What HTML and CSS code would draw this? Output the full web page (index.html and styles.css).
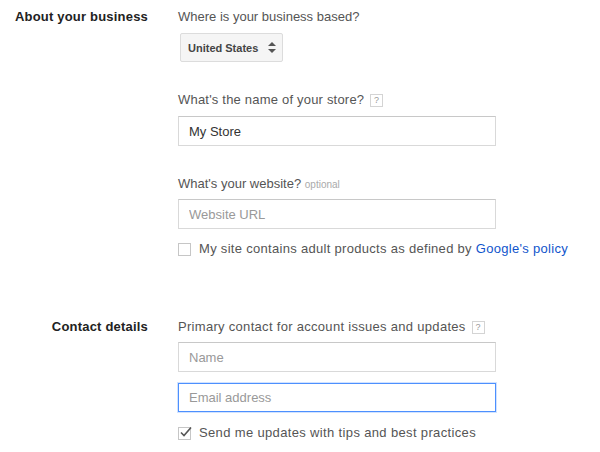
FILE: index.html
```html
<!DOCTYPE html>
<html>
<head>
    <meta charset="UTF-8">
    <title>Business information</title>
    <link rel="stylesheet" href="styles.css">
</head>
<body>
    <div class="section about">
        <div class="section-label">About your business</div>
        <div class="fields">
            <div class="question">Where is your business based?</div>
            <div class="select-btn">
                <span>United States</span>
                <svg width="8" height="11" viewBox="0 0 8 11"><path d="M4 0 L8 4 L0 4 Z M0 7 L8 7 L4 11 Z" fill="#555"/></svg>
            </div>

            <div class="question q-store">What's the name of your store? <span class="help">?</span></div>
            <input class="text-input" type="text" value="My Store">

            <div class="question q-site">What's your website? <span class="optional">optional</span></div>
            <input class="text-input input-site" type="text" placeholder="Website URL">

            <label class="check-row check-adult">
                <span class="checkbox"></span>
                <span>My site contains adult products as defined by <a href="#">Google's policy</a></span>
            </label>
        </div>
    </div>

    <div class="section contact">
        <div class="section-label">Contact details</div>
        <div class="fields">
            <div class="question wide">Primary contact for account issues and updates <span class="help">?</span></div>
            <input class="text-input input-name" type="text" placeholder="Name">
            <input class="text-input focused" type="text" placeholder="Email address">
            <label class="check-row check-updates">
                <span class="checkbox">
                    <svg width="13" height="13" viewBox="0 0 13 13"><path d="M2 6.5 L5 9.5 L12 1.5" fill="none" stroke="#555" stroke-width="1.6"/></svg>
                </span>
                <span>Send me updates with tips and best practices</span>
            </label>
        </div>
    </div>
</body>
</html>
```

FILE: styles.css
```css
body {
    margin: 0;
    background: #fff;
    font-family: "Liberation Sans", Arial, sans-serif;
    font-size: 13px;
    color: #555;
}

.section {
    display: grid;
    grid-template-columns: 148px 1fr;
    column-gap: 30px;
}

.about {
    padding-top: 8px;
}

.contact {
    margin-top: 60px;
}

.section-label {
    text-align: right;
    font-weight: bold;
    color: #222;
    line-height: 18px;
    letter-spacing: 0.2px;
}

.fields {
    display: flex;
    flex-direction: column;
    align-items: flex-start;
}

.question {
    line-height: 18px;
    color: #555;
    white-space: nowrap;
}

.question.wide {
    letter-spacing: 0.3px;
}

.q-store {
    margin-top: 29px;
    letter-spacing: 0.2px;
}

.q-site {
    margin-top: 29px;
}

.help {
    display: inline-block;
    width: 11px;
    height: 11px;
    border: 1px solid #d4d4d4;
    font-size: 9px;
    line-height: 11px;
    text-align: center;
    color: #999;
    vertical-align: 1px;
    margin-left: 2px;
    letter-spacing: 0;
}

.optional {
    font-size: 10px;
    color: #aaa;
    letter-spacing: 0;
}

.select-btn {
    margin-top: 7px;
    margin-left: 2px;
    box-sizing: border-box;
    width: 103px;
    height: 29px;
    padding: 0 6px 0 7px;
    display: flex;
    align-items: center;
    justify-content: space-between;
    background: #f5f5f5;
    border: 1px solid #dcdcdc;
    border-radius: 2px;
    font-size: 11px;
    font-weight: bold;
    color: #444;
}

.text-input {
    box-sizing: border-box;
    width: 318px;
    height: 30px;
    margin: 7px 0 0;
    padding: 0 10px;
    border: 1px solid #d9d9d9;
    border-top-color: #c8c8c8;
    font-family: inherit;
    font-size: 13px;
    color: #333;
    outline: none;
}

.input-site {
    margin-top: 5px;
}

.input-name {
    margin-top: 6px;
}

.text-input::placeholder {
    color: #999;
}

.text-input.focused {
    margin-top: 11px;
    height: 29px;
    border: 1px solid #4d90fe;
    box-shadow: 0 0 0 1px rgba(77, 144, 254, 0.25);
}

.check-row {
    display: flex;
    align-items: center;
    gap: 8px;
    line-height: 18px;
    color: #555;
    white-space: nowrap;
    letter-spacing: 0.3px;
}

.check-adult {
    margin-top: 11px;
}

.check-updates {
    margin-top: 12px;
    letter-spacing: 0.35px;
}

.checkbox {
    box-sizing: border-box;
    flex: none;
    width: 13px;
    height: 13px;
    border: 1px solid #c6c6c6;
    position: relative;
}

.checkbox svg {
    position: absolute;
    left: 0;
    top: -2px;
}

a {
    color: #15c;
    text-decoration: none;
}
```
